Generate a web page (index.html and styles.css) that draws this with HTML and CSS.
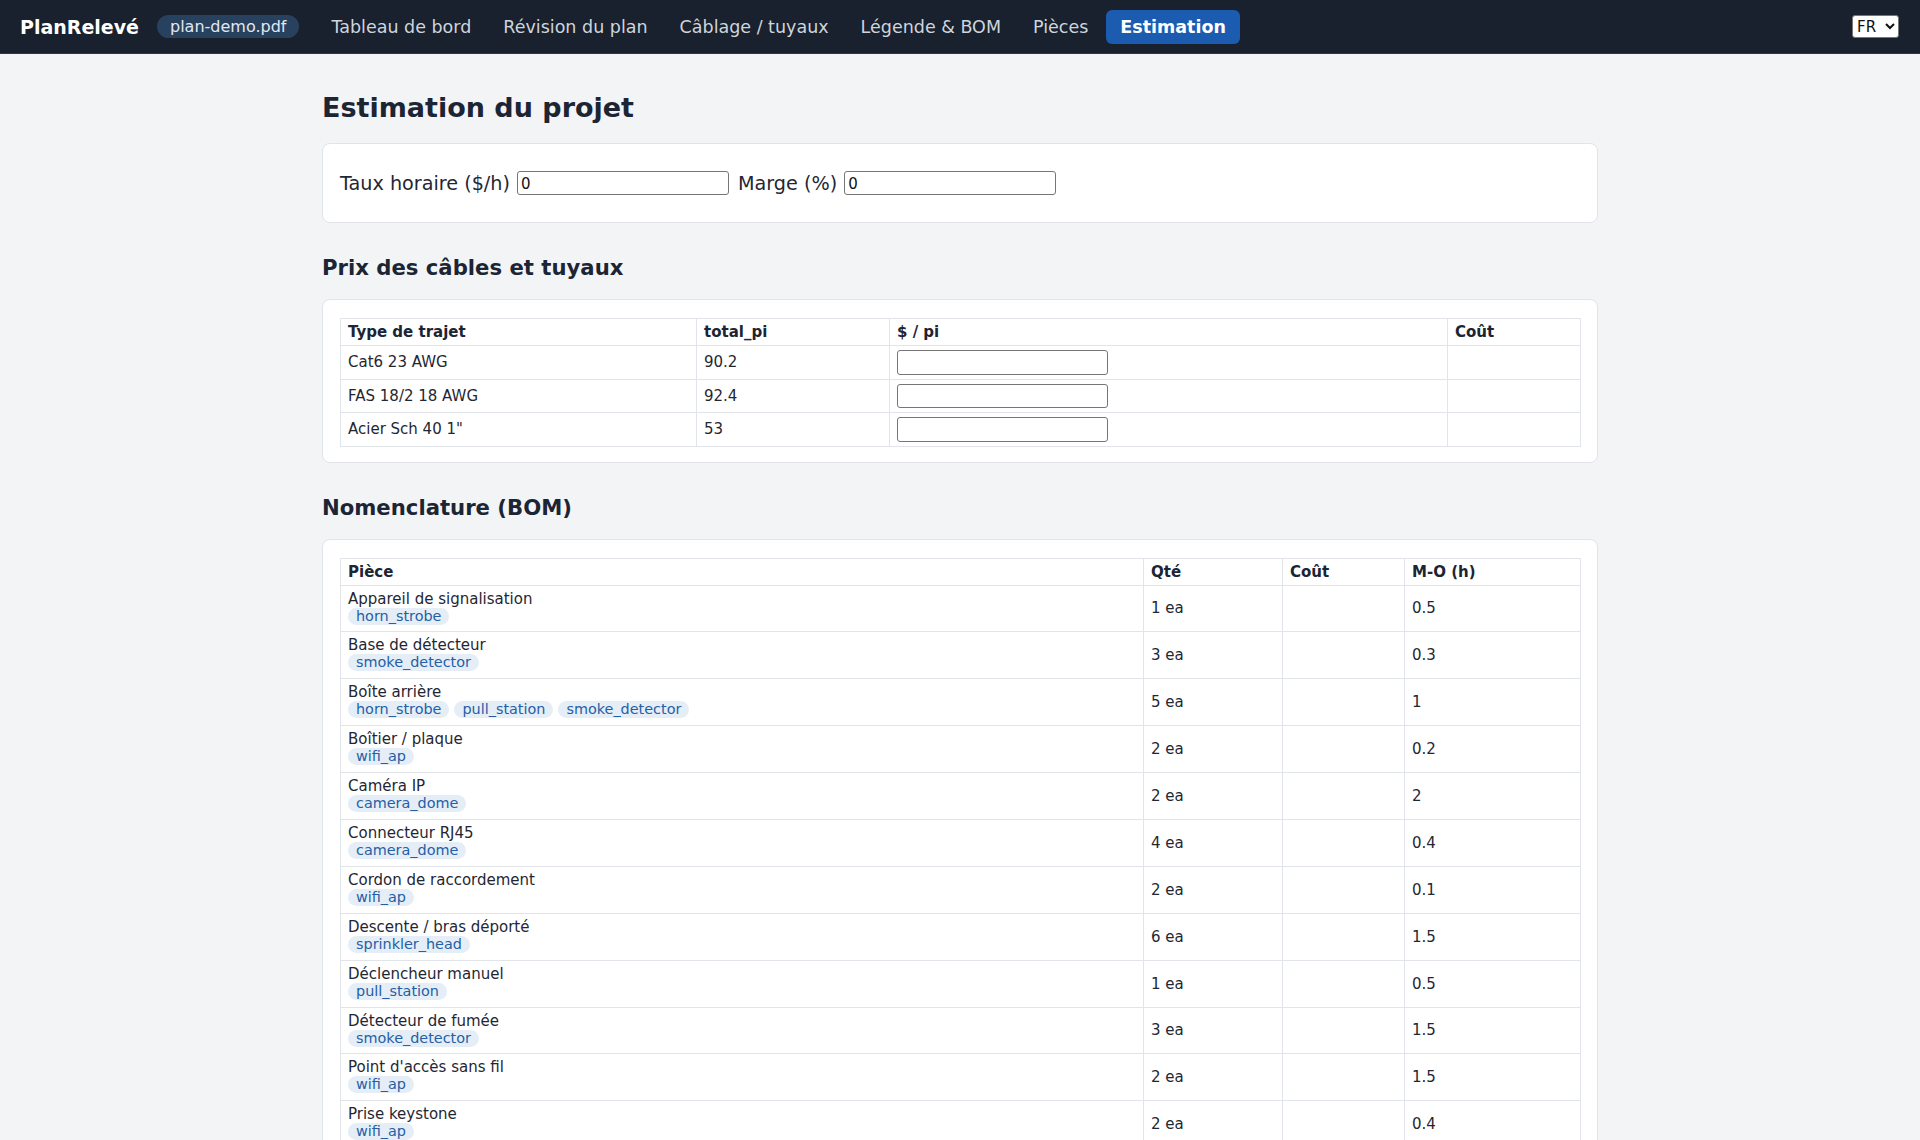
FILE: index.html
```html
<!DOCTYPE html>
<html lang="fr">
<head>
    <meta charset="UTF-8">
    <meta name="viewport" content="width=device-width, initial-scale=1.0">
    <title>PlanRelevé - Estimation</title>
    <link rel="stylesheet" href="styles.css">
</head>
<body>
    <header class="topbar">
        <span class="brand">PlanRelevé</span>
        <span class="file-pill">plan-demo.pdf</span>
        <nav class="tabs">
            <a href="#">Tableau de bord</a>
            <a href="#">Révision du plan</a>
            <a href="#">Câblage / tuyaux</a>
            <a href="#">Légende &amp; BOM</a>
            <a href="#">Pièces</a>
            <a href="#" class="active">Estimation</a>
        </nav>
        <select class="lang">
            <option>FR</option>
            <option>EN</option>
        </select>
    </header>

    <main class="page">
        <h1>Estimation du projet</h1>

        <div class="card rates">
            <label>Taux horaire ($/h) <input type="text" value="0"></label>
            <label>Marge (%) <input type="text" value="0"></label>
        </div>

        <h2>Prix des câbles et tuyaux</h2>
        <div class="card">
            <table class="grid">
                <colgroup>
                    <col style="width: 356px">
                    <col style="width: 193px">
                    <col style="width: 558px">
                    <col style="width: 133px">
                </colgroup>
                <thead>
                    <tr><th>Type de trajet</th><th>total_pi</th><th>$ / pi</th><th>Coût</th></tr>
                </thead>
                <tbody>
                    <tr><td>Cat6 23 AWG</td><td>90.2</td><td><input class="price" type="text"></td><td></td></tr>
                    <tr><td>FAS 18/2 18 AWG</td><td>92.4</td><td><input class="price" type="text"></td><td></td></tr>
                    <tr><td>Acier Sch 40 1"</td><td>53</td><td><input class="price" type="text"></td><td></td></tr>
                </tbody>
            </table>
        </div>

        <h2>Nomenclature (BOM)</h2>
        <div class="card">
            <table class="grid bom">
                <colgroup>
                    <col style="width: 803px">
                    <col style="width: 139px">
                    <col style="width: 122px">
                    <col style="width: 176px">
                </colgroup>
                <thead>
                    <tr><th>Pièce</th><th>Qté</th><th>Coût</th><th>M-O (h)</th></tr>
                </thead>
                <tbody>
                    <tr>
                        <td>Appareil de signalisation<div class="tags"><span class="tag">horn_strobe</span></div></td>
                        <td>1 ea</td><td></td><td>0.5</td>
                    </tr>
                    <tr>
                        <td>Base de détecteur<div class="tags"><span class="tag">smoke_detector</span></div></td>
                        <td>3 ea</td><td></td><td>0.3</td>
                    </tr>
                    <tr>
                        <td>Boîte arrière<div class="tags"><span class="tag">horn_strobe</span><span class="tag">pull_station</span><span class="tag">smoke_detector</span></div></td>
                        <td>5 ea</td><td></td><td>1</td>
                    </tr>
                    <tr>
                        <td>Boîtier / plaque<div class="tags"><span class="tag">wifi_ap</span></div></td>
                        <td>2 ea</td><td></td><td>0.2</td>
                    </tr>
                    <tr>
                        <td>Caméra IP<div class="tags"><span class="tag">camera_dome</span></div></td>
                        <td>2 ea</td><td></td><td>2</td>
                    </tr>
                    <tr>
                        <td>Connecteur RJ45<div class="tags"><span class="tag">camera_dome</span></div></td>
                        <td>4 ea</td><td></td><td>0.4</td>
                    </tr>
                    <tr>
                        <td>Cordon de raccordement<div class="tags"><span class="tag">wifi_ap</span></div></td>
                        <td>2 ea</td><td></td><td>0.1</td>
                    </tr>
                    <tr>
                        <td>Descente / bras déporté<div class="tags"><span class="tag">sprinkler_head</span></div></td>
                        <td>6 ea</td><td></td><td>1.5</td>
                    </tr>
                    <tr>
                        <td>Déclencheur manuel<div class="tags"><span class="tag">pull_station</span></div></td>
                        <td>1 ea</td><td></td><td>0.5</td>
                    </tr>
                    <tr>
                        <td>Détecteur de fumée<div class="tags"><span class="tag">smoke_detector</span></div></td>
                        <td>3 ea</td><td></td><td>1.5</td>
                    </tr>
                    <tr>
                        <td>Point d'accès sans fil<div class="tags"><span class="tag">wifi_ap</span></div></td>
                        <td>2 ea</td><td></td><td>1.5</td>
                    </tr>
                    <tr>
                        <td>Prise keystone<div class="tags"><span class="tag">wifi_ap</span></div></td>
                        <td>2 ea</td><td></td><td>0.4</td>
                    </tr>
                    <tr>
                        <td>Tête de gicleur<div class="tags"><span class="tag">sprinkler_head</span></div></td>
                        <td>6 ea</td><td></td><td>0.5</td>
                    </tr>
                </tbody>
            </table>
        </div>
    </main>
</body>
</html>
```

FILE: styles.css
```css
body {
    font-family: 'DejaVu Sans', 'Noto Sans', sans-serif;
    color: #1f2733;
    background-color: #f3f4f6;
    margin: 0;
}
.topbar {
    display: flex;
    align-items: center;
    gap: 18px;
    height: 53px;
    padding: 0 21px 0 20px;
    background-color: #18212d;
    border-bottom: 1px solid #2c3644;
}
.brand {
    color: #fff;
    font-weight: bold;
    font-size: 19px;
}
.file-pill {
    background-color: #28415f;
    color: #e1e8f1;
    font-size: 16px;
    padding: 2px 13px;
    border-radius: 12px;
}
.tabs {
    display: flex;
    gap: 4px;
}
.tabs a {
    color: #cfd5dd;
    text-decoration: none;
    font-size: 17.5px;
    padding: 7px 14px;
    border-radius: 6px;
}
.tabs a.active {
    background-color: #1b5cb0;
    color: #fff;
    font-weight: bold;
}
.lang {
    margin-left: auto;
    width: 47px;
    height: 23px;
    font-family: 'DejaVu Sans', sans-serif;
    font-size: 15px;
    background-color: #fff;
    color: #111;
    border: 1px solid #767676;
    border-radius: 3px;
}
.page {
    width: 1276px;
    margin: 0 auto;
    padding-bottom: 40px;
}
h1 {
    font-size: 27px;
    color: #1c2533;
    margin: 38px 0 20px;
}
h2 {
    font-size: 21.2px;
    color: #1c2533;
    margin: 32px 0 19px;
}
.card {
    background-color: #fff;
    border: 1px solid #e1e4e8;
    border-radius: 8px;
    padding: 18px 17px 15px;
}
.rates {
    display: flex;
    align-items: center;
    gap: 9px;
    padding: 27px 17px;
}
.rates label {
    display: flex;
    align-items: center;
    gap: 7px;
    font-size: 19.2px;
}
.rates input,
.price {
    box-sizing: border-box;
    width: 212px;
    height: 24px;
    font-family: 'DejaVu Sans', sans-serif;
    font-size: 15px;
    color: #111;
    padding: 2px 3px 0;
    border: 1px solid #767676;
    border-radius: 3px;
}
.price {
    display: block;
    width: 211px;
    height: 24.5px;
}
.grid {
    width: 100%;
    table-layout: fixed;
    border-collapse: collapse;
    font-size: 15px;
}
.grid th,
.grid td {
    border: 1px solid #e1e4e8;
    padding: 4px 7px;
    text-align: left;
    vertical-align: middle;
}
.grid th {
    font-weight: bold;
    color: #1c2533;
}
.bom td:first-child {
    padding-bottom: 6.9px;
}
.tags {
    display: flex;
    gap: 5px;
}
.tag {
    background-color: #e5edf7;
    color: #245fa6;
    font-size: 14.4px;
    line-height: 17px;
    padding: 0 8px;
    border-radius: 9px;
}
```
